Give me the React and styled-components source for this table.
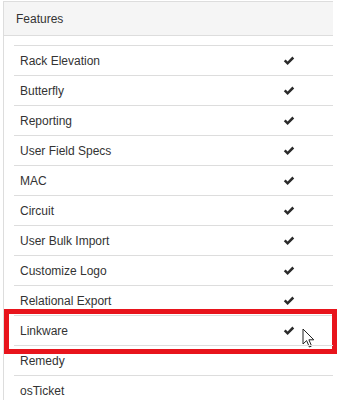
import React from 'react';
import styled, { createGlobalStyle } from 'styled-components';

const GlobalStyle = createGlobalStyle`
  body {
    margin: 0;
    background: #fff;
    font-family: "Liberation Sans", Arial, sans-serif;
    color: #333;
  }
`;

const Page = styled.div`
  width: 344px;
  height: 400px;
  overflow: hidden;
  padding: 1px 0 0 3px;
  box-sizing: border-box;
`;

const Panel = styled.section`
  width: 329px;
  border: 1px solid #ddd;
  border-right: none;
  border-bottom: none;
`;

const Header = styled.div`
  height: 33px;
  background: #f5f5f5;
  border-bottom: 1px solid #ddd;
  display: flex;
  align-items: center;
  padding-left: 12px;
  font-size: 12px;
`;

const Body = styled.div`
  padding: 9px 0 0 10px;
`;

const Row = styled.div`
  position: relative;
  display: grid;
  grid-template-columns: 1fr 88px;
  align-items: center;
  height: 29px;
  border-top: 1px solid #ddd;
  font-size: 12px;
`;

const Name = styled.span`
  padding-left: 6px;
`;

const Check = styled.span`
  display: flex;
  justify-content: center;
  color: #333;
`;

const Highlight = styled.div`
  position: absolute;
  left: -10px;
  top: -7px;
  width: 323px;
  height: 35px;
  border: 5px solid #e8141c;
`;

const Cursor = styled.svg`
  position: absolute;
  left: 288px;
  top: 12px;
`;

const features = [
  ['Rack Elevation', true],
  ['Butterfly', true],
  ['Reporting', true],
  ['User Field Specs', true],
  ['MAC', true],
  ['Circuit', true],
  ['User Bulk Import', true],
  ['Customize Logo', true],
  ['Relational Export', true],
  ['Linkware', true, true],
  ['Remedy', false],
  ['osTicket', false],
];

const CheckIcon = () => (
  <svg width="12" height="10" viewBox="0 0 12 10">
    <path d="M0.8 5.2 L2.6 3.4 L4.6 5.4 L9.4 0.6 L11.2 2.4 L4.6 9 Z" fill="#2b2b2b" />
  </svg>
);

const App = () => (
  <Page>
    <GlobalStyle />
    <Panel>
      <Header>Features</Header>
      <Body>
        {features.map(([name, on, marked]) => (
          <Row key={name}>
            <Name>{name}</Name>
            <Check>{on && <CheckIcon />}</Check>
            {marked && <Highlight />}
            {marked && (
              <Cursor width="13" height="21" viewBox="0 0 13 21">
                <path
                  d="M1 1 L1 16 L4.6 12.6 L7.4 19 L9.6 18 L6.9 11.8 L11.8 11.8 Z"
                  fill="#fff"
                  stroke="#222"
                  strokeWidth="1"
                  strokeLinejoin="round"
                />
              </Cursor>
            )}
          </Row>
        ))}
      </Body>
    </Panel>
  </Page>
);

export default App;
